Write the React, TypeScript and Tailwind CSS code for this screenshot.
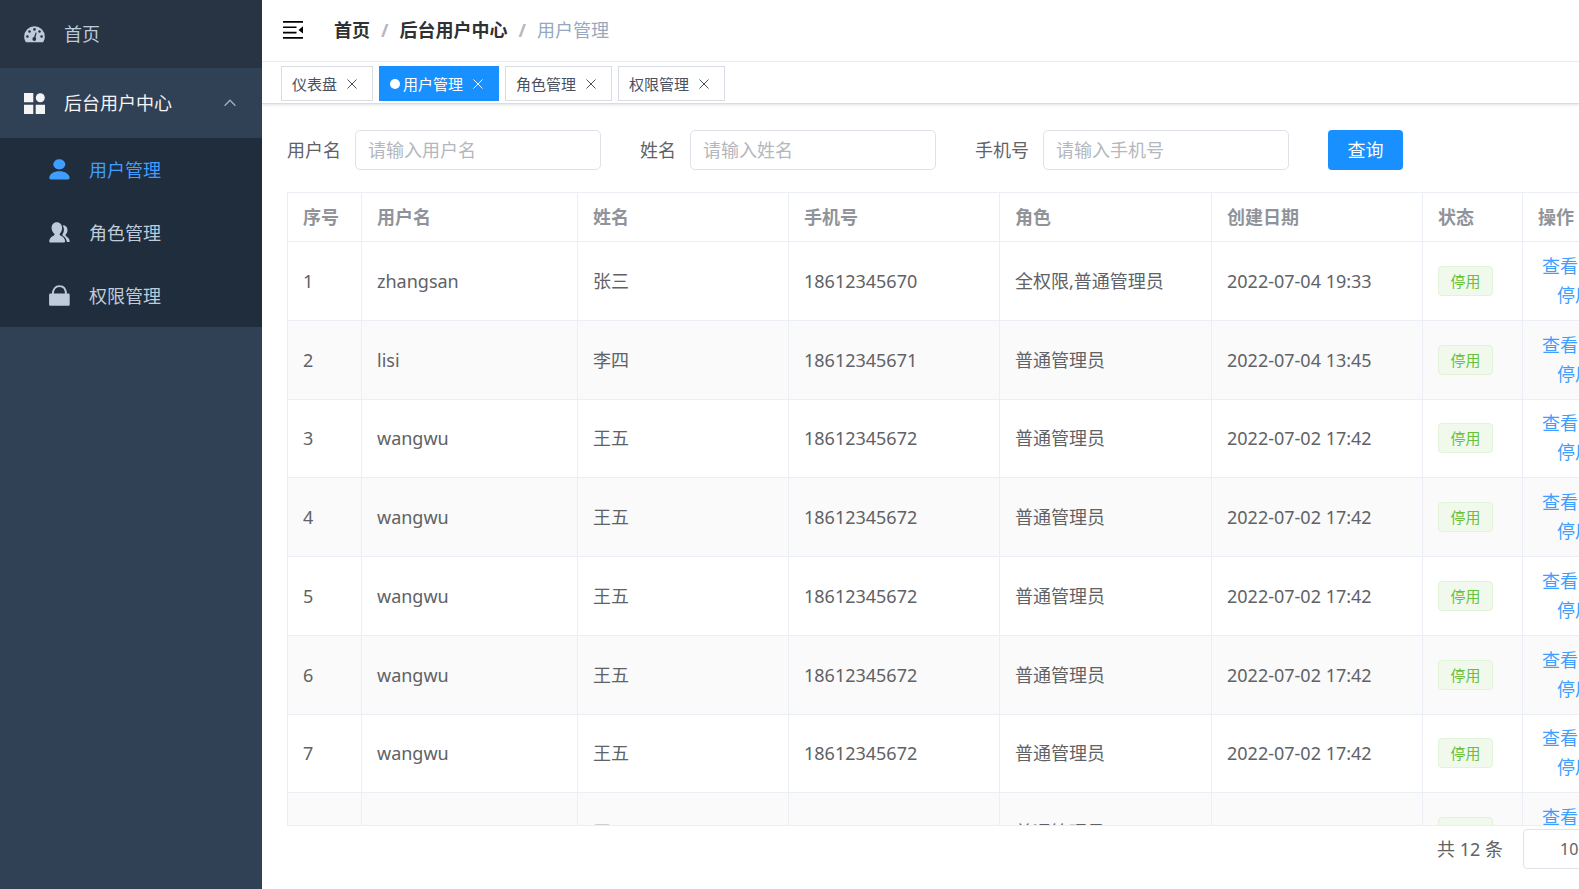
import React, { useState } from "react";

type User = {
  username: string;
  name: string;
  phone: string;
  roles: string;
  createdAt: string;
};

const users: User[] = [
  { username: "zhangsan", name: "张三", phone: "18612345670", roles: "全权限,普通管理员", createdAt: "2022-07-04 19:33" },
  { username: "lisi", name: "李四", phone: "18612345671", roles: "普通管理员", createdAt: "2022-07-04 13:45" },
  { username: "wangwu", name: "王五", phone: "18612345672", roles: "普通管理员", createdAt: "2022-07-02 17:42" },
  { username: "wangwu", name: "王五", phone: "18612345672", roles: "普通管理员", createdAt: "2022-07-02 17:42" },
  { username: "wangwu", name: "王五", phone: "18612345672", roles: "普通管理员", createdAt: "2022-07-02 17:42" },
  { username: "wangwu", name: "王五", phone: "18612345672", roles: "普通管理员", createdAt: "2022-07-02 17:42" },
  { username: "wangwu", name: "王五", phone: "18612345672", roles: "普通管理员", createdAt: "2022-07-02 17:42" },
  { username: "wangwu", name: "王五", phone: "18612345672", roles: "普通管理员", createdAt: "2022-07-02 17:42" },
];

const tabs = ["仪表盘", "用户管理", "角色管理", "权限管理"];

const filters = [
  { id: "username", label: "用户名", placeholder: "请输入用户名" },
  { id: "name", label: "姓名", placeholder: "请输入姓名" },
  { id: "phone", label: "手机号", placeholder: "请输入手机号" },
];

const columns = [
  { title: "序号", width: "w-[74px]" },
  { title: "用户名", width: "w-[216px]" },
  { title: "姓名", width: "w-[211px]" },
  { title: "手机号", width: "w-[211px]" },
  { title: "角色", width: "w-[212px]" },
  { title: "创建日期", width: "w-[211px]" },
  { title: "状态", width: "w-[100px]" },
  { title: "操作", width: "" },
];

const DashboardIcon = () => (
  <svg viewBox="0 0 21 21" className="size-[21px]" fill="currentColor" aria-hidden="true">
    <path d="M10.5 2.3A10.3 10.3 0 0 0 .2 12.6c0 1.9.5 3.6 1.4 5.1.2.4.6.6 1 .6h15.8c.4 0 .8-.2 1-.6.9-1.5 1.4-3.2 1.4-5.1A10.3 10.3 0 0 0 10.5 2.3z" />
    <g fill="#283443">
      <circle cx="3.4" cy="12.5" r="1.3" />
      <circle cx="5.5" cy="7.5" r="1.3" />
      <circle cx="10.5" cy="5.4" r="1.3" />
      <circle cx="15.5" cy="7.5" r="1.3" />
      <circle cx="17.6" cy="12.5" r="1.3" />
      <circle cx="10.3" cy="15" r="1.9" />
      <path d="M11.6 8.5l1.1.3-1.5 6-1.6-.4z" />
    </g>
  </svg>
);

const ComponentIcon = () => (
  <svg viewBox="0 0 21 21" className="size-[21px]" fill="currentColor" aria-hidden="true">
    <path d="M0 0h9.3v9.3H0zM0 11.7h9.3V21H0zM11.7 11.7H21V21h-9.3z" />
    <circle cx="16.3" cy="4.7" r="4.5" />
  </svg>
);

const UserIcon = () => (
  <svg viewBox="0 0 21 21" className="size-[21px]" fill="currentColor" aria-hidden="true">
    <ellipse cx="10.3" cy="5.3" rx="6" ry="5.1" />
    <path d="M.3 18.6C.8 14.8 4.6 12.2 10.3 12.2s9.7 2.6 10.3 6.4c.1 1.2-.6 2-1.7 2H2c-1.1 0-1.8-.8-1.7-2z" />
  </svg>
);

const PeoplesIcon = () => (
  <svg viewBox="0 0 21 21" className="size-[21px]" fill="currentColor" aria-hidden="true">
    <path d="M7.8.3c3.3 0 5.3 2.4 5.3 5.8 0 2.4-1 4.5-2.4 5.7-.2 1.1.3 1.6 1.5 2.2 2.2 1 3.7 2.6 3.9 5.1.1.9-.4 1.500-1.3 1.5H1.5c-.9 0-1.400-.6-1.300-1.500.3-2.500 1.700-4.100 3.900-5.100 1.100-.6 1.600-1.100 1.300-2.200C3.800 10.600 2.600 8.500 2.600 6.100 2.600 2.700 4.500.3 7.800.3z" />
    <path d="M13.6 3.2c3 0 4.900 2 4.900 4.800 0 2-.8 3.500-1.900 4.500-.2.9.1 1.400.9 1.900 1.900 1.100 3 2.600 3.200 4.700.1.600-.3 1-.9 1h-1.900c-.3-3-1.600-4.900-3.800-6.200-.9-.5-.9-1.100-.4-2 1.600-2.500 1.800-5.700-.1-8.700z" />
  </svg>
);

const LockIcon = () => (
  <svg viewBox="0 0 21 21" className="size-[21px]" fill="currentColor" aria-hidden="true">
    <rect x=".1" y="8.6" width="20.6" height="12.2" rx="1.3" />
    <path d="M3.8 9.5C3.8 4 6.5 1.1 10.4 1.1S17 4 17 9.5" fill="none" stroke="currentColor" strokeWidth="1.9" />
  </svg>
);

const FoldIcon = () => (
  <svg viewBox="0 0 20 18" className="h-[18px] w-5" fill="currentColor" aria-hidden="true">
    <path d="M0 0h20v1.7H0zM0 5.4h13.5v1.7H0zM0 10.7h13.5v1.7H0zM0 16h20v1.7H0zM20 5.2v7.4l-4.5-3.7z" />
  </svg>
);

const ChevronUp = () => (
  <svg viewBox="0 0 12 8" className="h-2 w-3" fill="none" stroke="#a3afbf" strokeWidth="1.3" aria-hidden="true">
    <path d="M.6 6.8L6 1.2l5.4 5.6" />
  </svg>
);

const CloseIcon = () => (
  <svg viewBox="0 0 10 10" className="size-[10px]" fill="none" stroke="currentColor" strokeWidth="1" aria-hidden="true">
    <path d="M.5.5l9 9M9.5.5l-9 9" />
  </svg>
);

const subMenu = [
  { label: "用户管理", icon: <UserIcon /> },
  { label: "角色管理", icon: <PeoplesIcon /> },
  { label: "权限管理", icon: <LockIcon /> },
];

function Sidebar() {
  return (
    <nav className="w-[262px] shrink-0 bg-[#304156] text-[#bfcbd9]">
      <a href="#home" className="flex h-[68px] items-center gap-[19px] bg-[#283443] pl-6">
        <DashboardIcon />
        首页
      </a>
      <button className="flex h-[70px] w-full items-center gap-[19px] pr-[26px] pl-6 text-[#f4f4f5]">
        <ComponentIcon />
        <span className="flex-1 text-left">后台用户中心</span>
        <ChevronUp />
      </button>
      <ul className="bg-[#1f2d3d]">
        {subMenu.map((item, i) => (
          <li key={item.label}>
            <a
              href={`#${i}`}
              className={`flex h-[63px] items-center gap-[19px] pl-[49px] ${i === 0 ? "text-[#409eff]" : ""}`}
            >
              {item.icon}
              {item.label}
            </a>
          </li>
        ))}
      </ul>
    </nav>
  );
}

function Header() {
  return (
    <header className="flex h-[62px] shrink-0 items-center border-b border-[#f0f1f3] pb-[2px] pl-[21px]">
      <button aria-label="收起菜单" className="text-black">
        <FoldIcon />
      </button>
      <ol className="ml-[31px] flex items-center gap-[11px]">
        <li>
          <a href="#home" className="font-bold text-[#303133]">首页</a>
        </li>
        <li className="font-bold text-[#b4b8c0]">/</li>
        <li>
          <a href="#center" className="font-bold text-[#303133]">后台用户中心</a>
        </li>
        <li className="font-bold text-[#b4b8c0]">/</li>
        <li className="text-[#97a8be]">用户管理</li>
      </ol>
    </header>
  );
}

function TagsView() {
  const [active, setActive] = useState("用户管理");

  return (
    <div className="flex h-[42px] shrink-0 items-center gap-[6px] border-b border-[#d8dce5] pt-[2px] pl-[19px] text-[15px] shadow-[0_1px_3px_0_rgba(0,0,0,0.12)]">
      {tabs.map((tab) => (
        <div
          key={tab}
          className={`flex h-[35px] items-center border pr-[15px] pl-[10px] ${
            tab === active
              ? "border-[#1890ff] bg-[#1890ff] text-white"
              : "border-[#d8dce5] bg-white text-[#495060]"
          }`}
        >
          {tab === active && <span className="mr-[3px] size-[10px] rounded-full bg-white" />}
          <button onClick={() => setActive(tab)}>{tab}</button>
          <button aria-label={`关闭${tab}`} className="ml-[10px]">
            <CloseIcon />
          </button>
        </div>
      ))}
    </div>
  );
}

function SearchForm() {
  return (
    <form className="flex items-center gap-[39px]" onSubmit={(e) => e.preventDefault()}>
      {filters.map((f) => (
        <div key={f.id} className="flex items-center gap-[14px]">
          <label htmlFor={f.id}>{f.label}</label>
          <input
            id={f.id}
            placeholder={f.placeholder}
            className="h-10 w-[246px] rounded-[5px] border border-[#dfe2e8] px-3 outline-none placeholder:text-[#b4b7bd]"
          />
        </div>
      ))}
      <button className="h-10 w-[75px] rounded-[4px] bg-[#1890ff] text-white">查询</button>
    </form>
  );
}

function UserTable() {
  return (
    <table className="h-[680px] w-full table-fixed border-collapse text-left">
      <thead>
        <tr className="h-[49px] text-[#909399]">
          {columns.map((c) => (
            <th key={c.title} className={`border border-[#ebeef5] px-[15px] font-bold ${c.width}`}>
              {c.title}
            </th>
          ))}
        </tr>
      </thead>
      <tbody>
        {users.map((u, i) => (
          <tr key={i} className="even:bg-[#fafafa]">
            <td className="border border-[#ebeef5] px-[15px]">{i + 1}</td>
            <td className="border border-[#ebeef5] px-[15px]">{u.username}</td>
            <td className="border border-[#ebeef5] px-[15px]">{u.name}</td>
            <td className="border border-[#ebeef5] px-[15px]">{u.phone}</td>
            <td className="border border-[#ebeef5] px-[15px]">{u.roles}</td>
            <td className="border border-[#ebeef5] px-[15px]">{u.createdAt}</td>
            <td className="border border-[#ebeef5] px-[15px]">
              <span className="flex h-[30px] w-[55px] items-center justify-center rounded-[4px] border border-[#e1f3d8] bg-[#f0f9eb] text-[15px] text-[#67c23a]">
                停用
              </span>
            </td>
            <td className="border border-[#ebeef5] px-[15px]">
              <div className="flex flex-col items-start leading-[29px] text-[#409eff]">
                <button className="ml-1">查看</button>
                <button className="ml-[19px]">停用</button>
              </div>
            </td>
          </tr>
        ))}
      </tbody>
    </table>
  );
}

function Pagination() {
  return (
    <div className="flex h-[63px] shrink-0 items-start justify-end gap-5 pt-[3px]">
      <span className="leading-10">共 12 条</span>
      <select
        aria-label="每页条数"
        className="h-10 w-[140px] appearance-none rounded-[4px] border border-[#dfe2e8] bg-white pl-9 text-base outline-none"
      >
        <option>10条/页</option>
        <option>20条/页</option>
        <option>50条/页</option>
      </select>
    </div>
  );
}

export default function App() {
  return (
    <div className="flex h-screen overflow-hidden bg-white font-['Noto_Sans','Noto_Sans_CJK_SC',sans-serif] text-[18px] leading-6 text-[#606266]">
      <Sidebar />
      <main className="flex min-w-0 flex-1 flex-col overflow-hidden">
        <Header />
        <TagsView />
        <section className="flex min-h-0 min-w-[1401px] flex-1 flex-col pt-[26px] pl-[25px]">
          <SearchForm />
          <div className="mt-[22px] min-h-0 flex-1 overflow-hidden border-b border-[#ebeef5]">
            <UserTable />
          </div>
          <Pagination />
        </section>
      </main>
    </div>
  );
}
